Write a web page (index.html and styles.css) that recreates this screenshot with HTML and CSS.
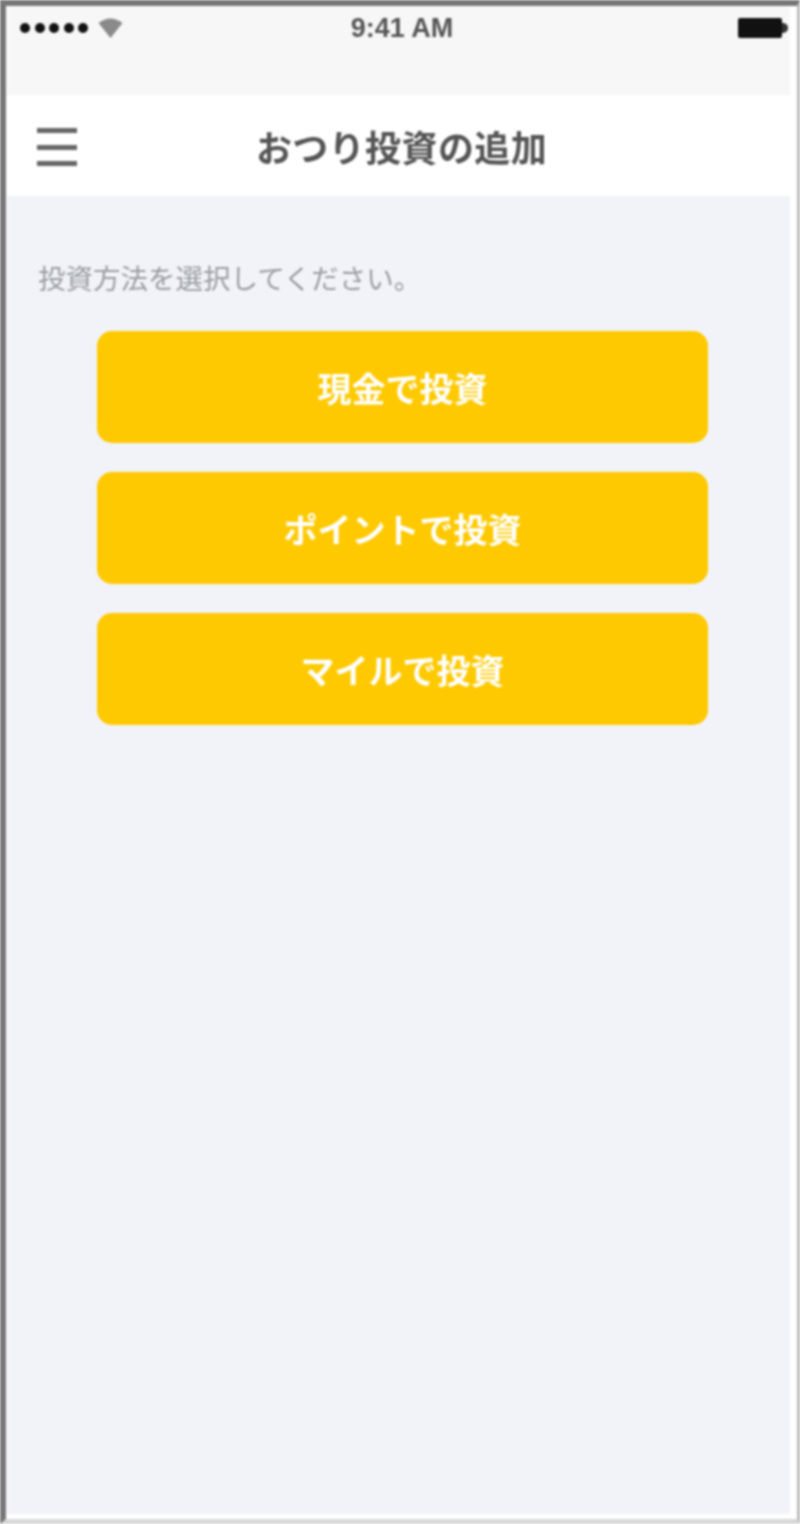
FILE: index.html
```html
<!DOCTYPE html>
<html lang="ja">
<head>
    <meta charset="UTF-8">
    <meta name="viewport" content="width=device-width, initial-scale=1.0">
    <title>おつり投資の追加</title>
    <link rel="stylesheet" href="styles.css">
</head>
<body>
    <div class="phone">
        <!-- Status bar -->
        <div class="status-bar">
            <div class="status-left">
                <span class="signal-dot"></span>
                <span class="signal-dot"></span>
                <span class="signal-dot"></span>
                <span class="signal-dot"></span>
                <span class="signal-dot"></span>
                <svg class="wifi" viewBox="0 0 26 22" width="27" height="22">
                    <path d="M13 21 L1 6 Q13 -3 25 6 Z" fill="#8a8a8a"/>
                </svg>
            </div>
            <div class="status-time">9:41 AM</div>
            <div class="battery">
                <span class="battery-body"></span>
                <span class="battery-tip"></span>
            </div>
        </div>

        <!-- Header -->
        <header class="header">
            <button class="menu-btn" aria-label="menu">
                <span></span>
                <span></span>
                <span></span>
            </button>
            <h1>おつり投資の追加</h1>
        </header>

        <!-- Content -->
        <main class="content">
            <p class="lead">投資方法を選択してください。</p>
            <div class="options">
                <button class="option-btn">現金で投資</button>
                <button class="option-btn">ポイントで投資</button>
                <button class="option-btn">マイルで投資</button>
            </div>
        </main>
    </div>
</body>
</html>
```

FILE: styles.css
```css
* {
    margin: 0;
    padding: 0;
    box-sizing: border-box;
    font-family: "Liberation Sans", "Noto Sans CJK JP", sans-serif;
}

html, body {
    width: 800px;
    height: 1524px;
    overflow: hidden;
    background-color: #fff;
}

/* the reference is a soft upscaled mockup */
.phone {
    width: 800px;
    height: 1524px;
    display: flex;
    flex-direction: column;
    background-color: #fff;
    border-style: solid;
    border-color: #777 #bbb #d8d8d8 #777;
    border-width: 6px 3px 5px 6px;
    padding: 1px 7px 5px 1px;
    filter: blur(0.8px);
}

.status-bar {
    height: 88px;
    padding: 6px 2px 0 13px;
    background-color: #f7f7f7;
    display: grid;
    grid-template-columns: 1fr auto 1fr;
    align-items: start;
}

.status-left {
    display: flex;
    align-items: center;
    gap: 4.5px;
    height: 30px;
}

.signal-dot {
    width: 10px;
    height: 10px;
    border-radius: 50%;
    background-color: #111;
}

.wifi {
    margin-left: 4px;
}

.status-time {
    font-size: 27px;
    font-weight: bold;
    line-height: 30px;
    color: #555;
    padding-right: 4px;
}

.battery {
    display: flex;
    align-items: center;
    justify-content: flex-end;
    height: 30px;
}

.battery-body {
    width: 44px;
    height: 20px;
    background-color: #111;
    border-radius: 2px;
}

.battery-tip {
    width: 6px;
    height: 10px;
    background-color: #333;
    border-radius: 0 5px 5px 0;
}

.header {
    height: 101px;
    position: relative;
    display: flex;
    align-items: center;
    justify-content: center;
    padding-left: 6px;
    background-color: #fff;
}

.header h1 {
    font-size: 36px;
    font-weight: bold;
    color: #555;
    letter-spacing: 0.4px;
}

.menu-btn {
    position: absolute;
    left: 30px;
    top: 33px;
    width: 40px;
    height: 38px;
    display: flex;
    flex-direction: column;
    justify-content: space-between;
    background: none;
    border: none;
}

.menu-btn span {
    display: block;
    height: 5px;
    background-color: #666;
}

.content {
    flex: 1;
    background-color: #f1f3f8;
    padding: 66px 0 0 31px;
}

.lead {
    font-size: 27.5px;
    line-height: 36px;
    color: #999ca1;
}

.options {
    margin-top: 33px;
    margin-left: 59px;
    width: 611px;
    display: flex;
    flex-direction: column;
    gap: 29px;
}

.option-btn {
    height: 112px;
    background-color: #ffc900;
    color: #fff;
    font-size: 34px;
    font-weight: bold;
    border: none;
    border-radius: 15px;
}
```
